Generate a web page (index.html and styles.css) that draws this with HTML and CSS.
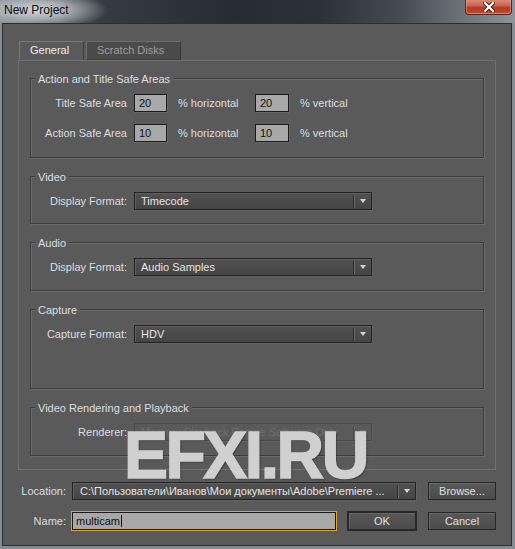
FILE: index.html
```
<!DOCTYPE html>
<html>
<head>
<meta charset="utf-8">
<title>New Project</title>
<link rel="stylesheet" href="styles.css">
</head>
<body>
<div class="window">
  <div class="titlebar">
    <span class="title">New Project</span>
    <div class="close">
      <svg width="12" height="10" viewBox="0 0 12 10">
        <path d="M2 1 L10 9 M10 1 L2 9" stroke="#3a1a14" stroke-width="4" stroke-linecap="square"/>
        <path d="M2 1 L10 9 M10 1 L2 9" stroke="#ffffff" stroke-width="2.2" stroke-linecap="square"/>
      </svg>
    </div>
  </div>
  <div class="client">
    <div class="tabs">
      <div class="tab active">General</div>
      <div class="tab inactive">Scratch Disks</div>
    </div>
    <div class="panel">
      <div class="group g-tall">
        <div class="gtitle">Action and Title Safe Areas</div>
        <div class="row">
          <span class="lbl">Title Safe Area</span>
          <span class="num">20</span>
          <span class="pct pct-h">% horizontal</span>
          <span class="num num2">20</span>
          <span class="pct">% vertical</span>
        </div>
        <div class="row row2">
          <span class="lbl">Action Safe Area</span>
          <span class="num">10</span>
          <span class="pct pct-h">% horizontal</span>
          <span class="num num2">10</span>
          <span class="pct">% vertical</span>
        </div>
      </div>
      <div class="group g-short">
        <div class="gtitle">Video</div>
        <div class="row">
          <span class="lbl">Display Format:</span>
          <div class="select"><span class="val">Timecode</span><span class="sep"></span><span class="arr"></span></div>
        </div>
      </div>
      <div class="group g-short2">
        <div class="gtitle">Audio</div>
        <div class="row">
          <span class="lbl">Display Format:</span>
          <div class="select"><span class="val">Audio Samples</span><span class="sep"></span><span class="arr"></span></div>
        </div>
      </div>
      <div class="group g-tall">
        <div class="gtitle">Capture</div>
        <div class="row">
          <span class="lbl">Capture Format:</span>
          <div class="select"><span class="val">HDV</span><span class="sep"></span><span class="arr"></span></div>
        </div>
      </div>
      <div class="group g-short2">
        <div class="gtitle">Video Rendering and Playback</div>
        <div class="row">
          <span class="lbl">Renderer:</span>
          <div class="select disabled"><span class="val">Mercury Playback Engine Software Only</span><span class="sep"></span><span class="arr"></span></div>
        </div>
      </div>
    </div>
    <div class="footer">
      <div class="frow">
        <span class="flbl">Location:</span>
        <div class="select loc"><span class="val">C:\Пользователи\Иванов\Мои документы\Adobe\Premiere ...</span><span class="sep"></span><span class="arr"></span></div>
        <button class="btn">Browse...</button>
      </div>
      <div class="frow frow-name">
        <span class="flbl">Name:</span>
        <div class="name"><span class="caret">multicam</span></div>
        <button class="btn ok">OK</button>
        <button class="btn">Cancel</button>
      </div>
    </div>
  </div>
  <div class="watermark">EFXI.RU</div>
</div>
</body>
</html>
```
FILE: styles.css
```
* { box-sizing: border-box; }
html, body { margin: 0; padding: 0; }
body {
  width: 515px;
  height: 549px;
  overflow: hidden;
  font-family: "Liberation Sans", Arial, sans-serif;
  font-size: 11px;
  color: #dcdcdc;
}
.window {
  position: relative;
  width: 515px;
  height: 549px;
  background-color: #878c91;
  background-image:
    radial-gradient(ellipse 70px 19px at 38px 10px, rgba(215,219,223,0.95) 0%, rgba(200,205,210,0.7) 45%, rgba(200,205,210,0) 100%),
    linear-gradient(90deg, #80868c 0%, #5a6168 8%, #353c44 20%, #252c33 45%, #2a3139 62%, #454c54 78%, #737a80 92%, #8e9499 100%);
  background-repeat: no-repeat;
  background-size: 100% 23px, 100% 23px;
  display: flex;
  flex-direction: column;
}
.titlebar {
  height: 23px;
  display: flex;
  justify-content: space-between;
  align-items: flex-start;
}
.title {
  font-size: 12px;
  line-height: 14px;
  padding: 3px 0 0 4px;
  color: #0c0c0c;
}
.close {
  width: 47px;
  height: 15px;
  margin-right: 3px;
  border: 1px solid #5a2419;
  border-top: none;
  border-radius: 0 0 4px 4px;
  background: linear-gradient(#d98a78 0%, #cc6450 40%, #b53a26 55%, #c04a33 100%);
  box-shadow: inset 0 -1px 0 rgba(255,190,170,0.5), inset 1px 0 0 rgba(255,190,170,0.4), inset -1px 0 0 rgba(255,190,170,0.4);
  display: flex;
  align-items: center;
  justify-content: center;
  padding-bottom: 1px;
}
.close svg { display: block; }
.client {
  margin: 0 3px 0 2px;
  height: 523px;
  border: 1px solid #2a2e33;
  background: #5a5a5a;
  padding: 17px 15px 0 15px;
}
.tabs {
  display: flex;
  gap: 2px;
  padding-left: 1px;
  height: 19px;
}
.tab {
  height: 19px;
  padding: 2px 0 0 10px;
  border: 1px solid;
  line-height: 13px;
}
.tab.active {
  width: 65px;
  background: #5a5a5a;
  border-color: #787878 #3d3d3d transparent #787878;
  color: #ececec;
}
.tab.inactive {
  width: 95px;
  background: #4b4b4b;
  border-color: #6c6c6c #393939 #3a3a3a #6c6c6c;
  color: #9d9d9d;
}
.panel {
  height: 410px;
  border: 1px solid #707070;
  padding: 17px 11px 0 11px;
  display: flex;
  flex-direction: column;
  gap: 18px;
}
.group {
  border: 1px solid #3c3c3c;
  box-shadow: 1px 1px 0 #6b6b6b, inset 1px 1px 0 #6b6b6b;
}
.g-tall { height: 80px; }
.g-short { height: 48px; }
.g-short2 { height: 49px; }
.gtitle {
  margin: -6px 0 0 4px;
  padding: 0 3px;
  width: fit-content;
  background: #5a5a5a;
  line-height: 13px;
  color: #dcdee0;
}
.row {
  display: flex;
  align-items: center;
  height: 18px;
  margin-top: 8px;
}
.row2 { margin-top: 12px; }
.lbl {
  width: 96px;
  margin-right: 7px;
  text-align: right;
  white-space: nowrap;
  color: #dcdee0;
}
.num {
  width: 33px;
  height: 18px;
  border: 1px solid #1b1b1b;
  background: #a8a8a8;
  color: #111;
  padding-left: 4px;
  line-height: 16px;
  margin-right: 11px;
  box-shadow: 1px 1px 0 #676767;
}
.num2 { width: 34px; }
.pct { color: #dcdee0; }
.pct-h { width: 77px; }
.select {
  width: 238px;
  height: 18px;
  display: flex;
  border: 1px solid #232323;
  background: linear-gradient(#515151, #454545);
  box-shadow: inset 1px 1px 0 #5f5f5f, 1px 1px 0 #636363;
  color: #e4e4e4;
}
.select .val {
  flex: 1;
  padding-left: 6px;
  line-height: 16px;
  white-space: nowrap;
  overflow: hidden;
}
.select .sep {
  width: 2px;
  margin: 2px 0 1px;
  border-left: 1px solid #2c2c2c;
  border-right: 1px solid #6a6a6a;
}
.select .arr {
  width: 16px;
  display: flex;
  align-items: center;
  justify-content: center;
}
.select .arr::before {
  content: "";
  width: 0;
  height: 0;
  border-top: 4px solid #d6d6d6;
  border-left: 3.5px solid transparent;
  border-right: 3.5px solid transparent;
}
.select.disabled {
  background: #5a5a5a;
  border-color: #4a4a4a;
  box-shadow: 1px 1px 0 #626262;
  color: #6e6e6e;
}
.select.disabled .sep { border-left-color: #4a4a4a; border-right-color: #666; }
.select.disabled .arr::before { border-top-color: #707070; }
.footer {
  margin-top: 12px;
  display: flex;
  flex-direction: column;
  gap: 11px;
}
.frow {
  display: flex;
  align-items: center;
  height: 18px;
}
.frow-name { height: 20px; }
.flbl {
  width: 48px;
  margin-right: 6px;
  text-align: right;
  color: #dcdee0;
}
.select.loc { width: 344px; margin-right: 12px; }
.select.loc .val { padding-left: 7px; }
.btn {
  width: 68px;
  height: 18px;
  padding: 0;
  border: 1px solid #262626;
  background: linear-gradient(#585858, #4b4b4b);
  box-shadow: inset 1px 1px 0 #686868;
  color: #e0e0e0;
  font-family: "Liberation Sans", Arial, sans-serif;
  font-size: 11px;
  line-height: 16px;
  text-align: center;
}
.btn.ok {
  width: 70px;
  height: 20px;
  border: 2px solid #282828;
  margin-right: 11px;
}
.name {
  width: 264px;
  height: 18px;
  border: 1px solid #1b1b1b;
  outline: 1px solid #e3a22c;
  background: #a8a8a8;
  color: #111;
  padding-left: 3px;
  line-height: 16px;
  margin-right: 11px;
}
.caret { border-right: 1px solid #111; padding-right: 1px; }
.watermark {
  position: absolute;
  left: 124px;
  top: 422px;
  font-family: "Liberation Sans", Arial, sans-serif;
  font-weight: bold;
  font-size: 66px;
  line-height: 1;
  letter-spacing: -2.5px;
  color: #d0d0d0;
  -webkit-text-stroke: 1.5px #d0d0d0;
  text-shadow: 1px 1px 2px rgba(0,0,0,0.55);
  white-space: nowrap;
}
```
